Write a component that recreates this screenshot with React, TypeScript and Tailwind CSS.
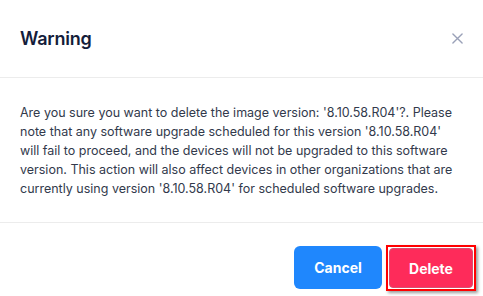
export default function App() {
  return (
    <div
      className="w-[483px] h-[296px] bg-white flex flex-col overflow-hidden"
      style={{ fontFamily: "Inter, 'Noto Sans', sans-serif" }}
    >
      {/* Header */}
      <div className="h-[78px] shrink-0 flex items-center justify-between pl-5 pr-[14px] border-b border-[#ececec]">
        <h2 className="text-[18px] font-semibold text-[#141d3a] tracking-[-0.2px]">
          Warning
        </h2>
        <button className="w-6 h-6 flex items-center justify-center text-[#9aa1b8]">
          <svg width="11" height="11" viewBox="0 0 12 12" fill="none">
            <path
              d="M1 1L11 11M11 1L1 11"
              stroke="currentColor"
              strokeWidth="1.5"
              strokeLinecap="round"
            />
          </svg>
        </button>
      </div>

      {/* Body */}
      <div className="px-5 pt-[25px] pb-[24px] border-b border-[#ececec]">
        <p className="text-[12.5px] leading-[19px] text-[#323a4c]">
          Are you sure you want to delete the image version: '8.10.58.R04'?.
          Please note that any software upgrade scheduled for this version
          '8.10.58.R04' will fail to proceed, and the devices will not be
          upgraded to this software version. This action will also affect
          devices in other organizations that are currently using version
          '8.10.58.R04' for scheduled software upgrades.
        </p>
      </div>

      {/* Footer */}
      <div className="flex justify-end items-start gap-1 pt-[22px] pr-[7px]">
        <button className="mt-px w-[88px] h-[43px] rounded-md bg-[#1f87fd] text-white text-[14px] font-bold">
          Cancel
        </button>
        <div className="p-px border-2 border-[#f00] shadow-[2px_2px_3px_rgba(0,0,0,0.4)]">
          <button className="w-[84px] h-[40px] rounded-[4px] border border-[#d8506e] bg-[#fe2b5a] text-white text-[14px] font-bold">
            Delete
          </button>
        </div>
      </div>
    </div>
  );
}
